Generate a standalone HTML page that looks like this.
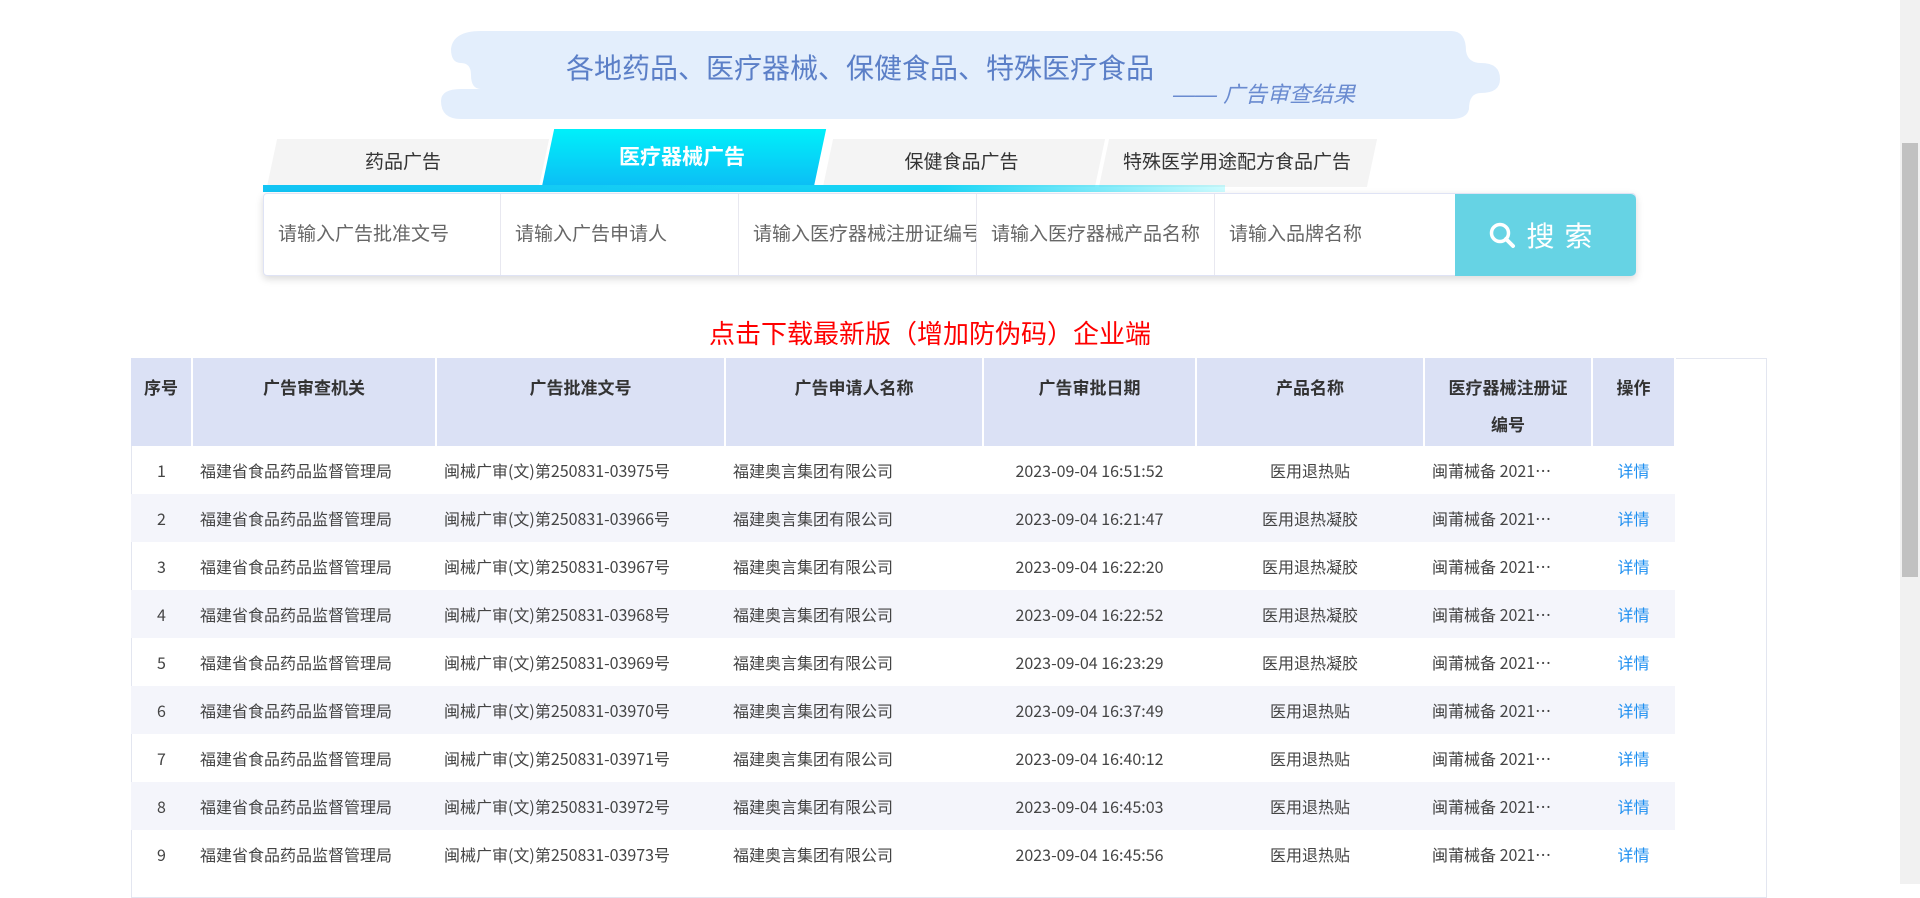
<!DOCTYPE html>
<html><head><meta charset="utf-8"><style>
*{margin:0;padding:0;box-sizing:border-box}
body{width:1920px;height:884px;overflow:hidden;background:#fff;font-family:"Liberation Sans","Noto Sans CJK SC",sans-serif;position:relative}
.abs{position:absolute}
.banner{left:441px;top:31px;width:1059px;height:88px}
.t1{left:566px;top:47px;font-size:28px;color:#5b7fc7;white-space:nowrap;font-family:"Noto Sans CJK SC",sans-serif;line-height:40px}
.t2{left:1173px;top:77px;font-size:22px;color:#6a8bd0;font-style:italic;white-space:nowrap}
.tab{top:139px;height:48px;background:#f4f4f4;transform:skewX(-12deg);}
.tabt{top:139px;height:48px;line-height:48px;text-align:center;font-size:19px;color:#333;white-space:nowrap}
.bar{left:263px;top:185px;width:962px;height:7px;background:linear-gradient(90deg,#12c4f4,#17d5f5 70%,rgba(0,240,255,0.2))}
.sbox{left:263px;top:193px;width:1373px;height:83px;background:#fff;box-shadow:0 3px 8px rgba(0,0,0,0.15);border:1px solid #dfe3f5;border-radius:4px}
.inp{top:194px;height:81px;line-height:81px;font-size:19px;color:#666;padding-left:14px;border-right:1px solid #e8e8f0;white-space:nowrap;overflow:hidden}
.btn{left:1455px;top:194px;width:181px;height:82px;background:#66d3e4;border-radius:0 5px 5px 0;color:#fff;font-size:28px;line-height:82px;text-align:center;letter-spacing:10px;font-family:"Noto Sans CJK SC",sans-serif}
.red{left:704px;width:452px;top:313px;text-align:center;color:#f00;font-size:26px;line-height:40px;white-space:nowrap;font-family:"Noto Sans CJK SC",sans-serif}
table{position:absolute;left:131px;top:358px;border-collapse:collapse;font-size:16px;color:#444;font-family:"Noto Sans CJK SC",sans-serif}
.outer{left:131px;top:358px;width:1636px;height:540px;border:1px solid #e3e6f0}
th{background:#dbe1f5;font-weight:bold;color:#333;font-size:17px;line-height:37px;vertical-align:top;padding-top:10px;border-right:2px solid #fff;height:88px}
td{height:48px;line-height:48px;vertical-align:middle;white-space:nowrap;padding-left:8px}
tr:nth-child(odd) td{background:#f4f5fb}
.c{text-align:center;padding-left:0}
.lk{color:#1e8ff0;text-align:center;padding-left:0}
.sb{left:1900px;top:0;width:20px;height:884px;background:#f1f1f1}
.th{left:1902px;top:143px;width:16px;height:434px;background:#c1c1c1}
</style></head><body>
<svg class="abs banner" viewBox="0 0 1059 88"><path d="M40 0 H1010 Q1025 0 1025 20 Q1027 32 1040 32 Q1059 32 1059 48 Q1059 62 1040 62 Q1028 62 1028 78 Q1026 88 1010 88 H20 Q0 88 0 70 Q0 58 20 58 H40 Q30 58 30 44 Q30 32 20 32 Q10 32 10 18 Q12 0 40 0Z" fill="#e3eefc"/></svg>
<div class="abs t1">各地药品、医疗器械、保健食品、特殊医疗食品</div>
<div class="abs t2">—— 广告审查结果</div>
<div class="abs tab" style="left:272px;width:272px"></div>
<div class="abs tab" style="left:828px;width:272px"></div>
<div class="abs tab" style="left:1104px;width:268px"></div>
<div class="abs tab" style="left:548px;top:129px;height:58px;width:272px;background:linear-gradient(180deg,#00f0fa,#0cbdf5)"></div>
<div class="abs tabt" style="left:267px;width:272px">药品广告</div>
<div class="abs tabt" style="left:542px;width:280px;top:129px;height:58px;line-height:58px;color:#fff;font-weight:bold;font-size:21px">医疗器械广告</div>
<div class="abs tabt" style="left:823px;width:277px">保健食品广告</div>
<div class="abs tabt" style="left:1100px;width:274px">特殊医学用途配方食品广告</div>
<div class="abs bar"></div>
<div class="abs sbox"></div>
<div class="abs inp" style="left:264px;width:237px">请输入广告批准文号</div>
<div class="abs inp" style="left:501px;width:238px">请输入广告申请人</div>
<div class="abs inp" style="left:739px;width:238px">请输入医疗器械注册证编号</div>
<div class="abs inp" style="left:977px;width:238px">请输入医疗器械产品名称</div>
<div class="abs inp" style="left:1215px;width:240px;border-right:none">请输入品牌名称</div>
<div class="abs btn"><svg width="30" height="30" viewBox="0 0 30 30" style="vertical-align:-5px;margin-right:8px"><circle cx="12" cy="12" r="8.5" fill="none" stroke="#fff" stroke-width="3.5"/><line x1="18" y1="18" x2="25" y2="25" stroke="#fff" stroke-width="4" stroke-linecap="round"/></svg>搜索</div>
<div class="abs red">点击下载最新版（增加防伪码）企业端</div>
<div class="abs outer"></div>
<table>
<tr><th style="width:61px">序号</th><th style="width:244px">广告审查机关</th><th style="width:289px">广告批准文号</th><th style="width:258px">广告申请人名称</th><th style="width:213px">广告审批日期</th><th style="width:228px">产品名称</th><th style="width:168px">医疗器械注册证<br>编号</th><th style="width:83px">操作</th></tr>
<tr><td class="c">1</td><td>福建省食品药品监督管理局</td><td>闽械广审(文)第250831-03975号</td><td>福建奥言集团有限公司</td><td class="c">2023-09-04 16:51:52</td><td class="c">医用退热贴</td><td>闽莆械备 2021…</td><td class="lk">详情</td></tr>
<tr><td class="c">2</td><td>福建省食品药品监督管理局</td><td>闽械广审(文)第250831-03966号</td><td>福建奥言集团有限公司</td><td class="c">2023-09-04 16:21:47</td><td class="c">医用退热凝胶</td><td>闽莆械备 2021…</td><td class="lk">详情</td></tr>
<tr><td class="c">3</td><td>福建省食品药品监督管理局</td><td>闽械广审(文)第250831-03967号</td><td>福建奥言集团有限公司</td><td class="c">2023-09-04 16:22:20</td><td class="c">医用退热凝胶</td><td>闽莆械备 2021…</td><td class="lk">详情</td></tr>
<tr><td class="c">4</td><td>福建省食品药品监督管理局</td><td>闽械广审(文)第250831-03968号</td><td>福建奥言集团有限公司</td><td class="c">2023-09-04 16:22:52</td><td class="c">医用退热凝胶</td><td>闽莆械备 2021…</td><td class="lk">详情</td></tr>
<tr><td class="c">5</td><td>福建省食品药品监督管理局</td><td>闽械广审(文)第250831-03969号</td><td>福建奥言集团有限公司</td><td class="c">2023-09-04 16:23:29</td><td class="c">医用退热凝胶</td><td>闽莆械备 2021…</td><td class="lk">详情</td></tr>
<tr><td class="c">6</td><td>福建省食品药品监督管理局</td><td>闽械广审(文)第250831-03970号</td><td>福建奥言集团有限公司</td><td class="c">2023-09-04 16:37:49</td><td class="c">医用退热贴</td><td>闽莆械备 2021…</td><td class="lk">详情</td></tr>
<tr><td class="c">7</td><td>福建省食品药品监督管理局</td><td>闽械广审(文)第250831-03971号</td><td>福建奥言集团有限公司</td><td class="c">2023-09-04 16:40:12</td><td class="c">医用退热贴</td><td>闽莆械备 2021…</td><td class="lk">详情</td></tr>
<tr><td class="c">8</td><td>福建省食品药品监督管理局</td><td>闽械广审(文)第250831-03972号</td><td>福建奥言集团有限公司</td><td class="c">2023-09-04 16:45:03</td><td class="c">医用退热贴</td><td>闽莆械备 2021…</td><td class="lk">详情</td></tr>
<tr><td class="c">9</td><td>福建省食品药品监督管理局</td><td>闽械广审(文)第250831-03973号</td><td>福建奥言集团有限公司</td><td class="c">2023-09-04 16:45:56</td><td class="c">医用退热贴</td><td>闽莆械备 2021…</td><td class="lk">详情</td></tr>
</table>
<div class="abs sb"></div><div class="abs th"></div>
</body></html>
